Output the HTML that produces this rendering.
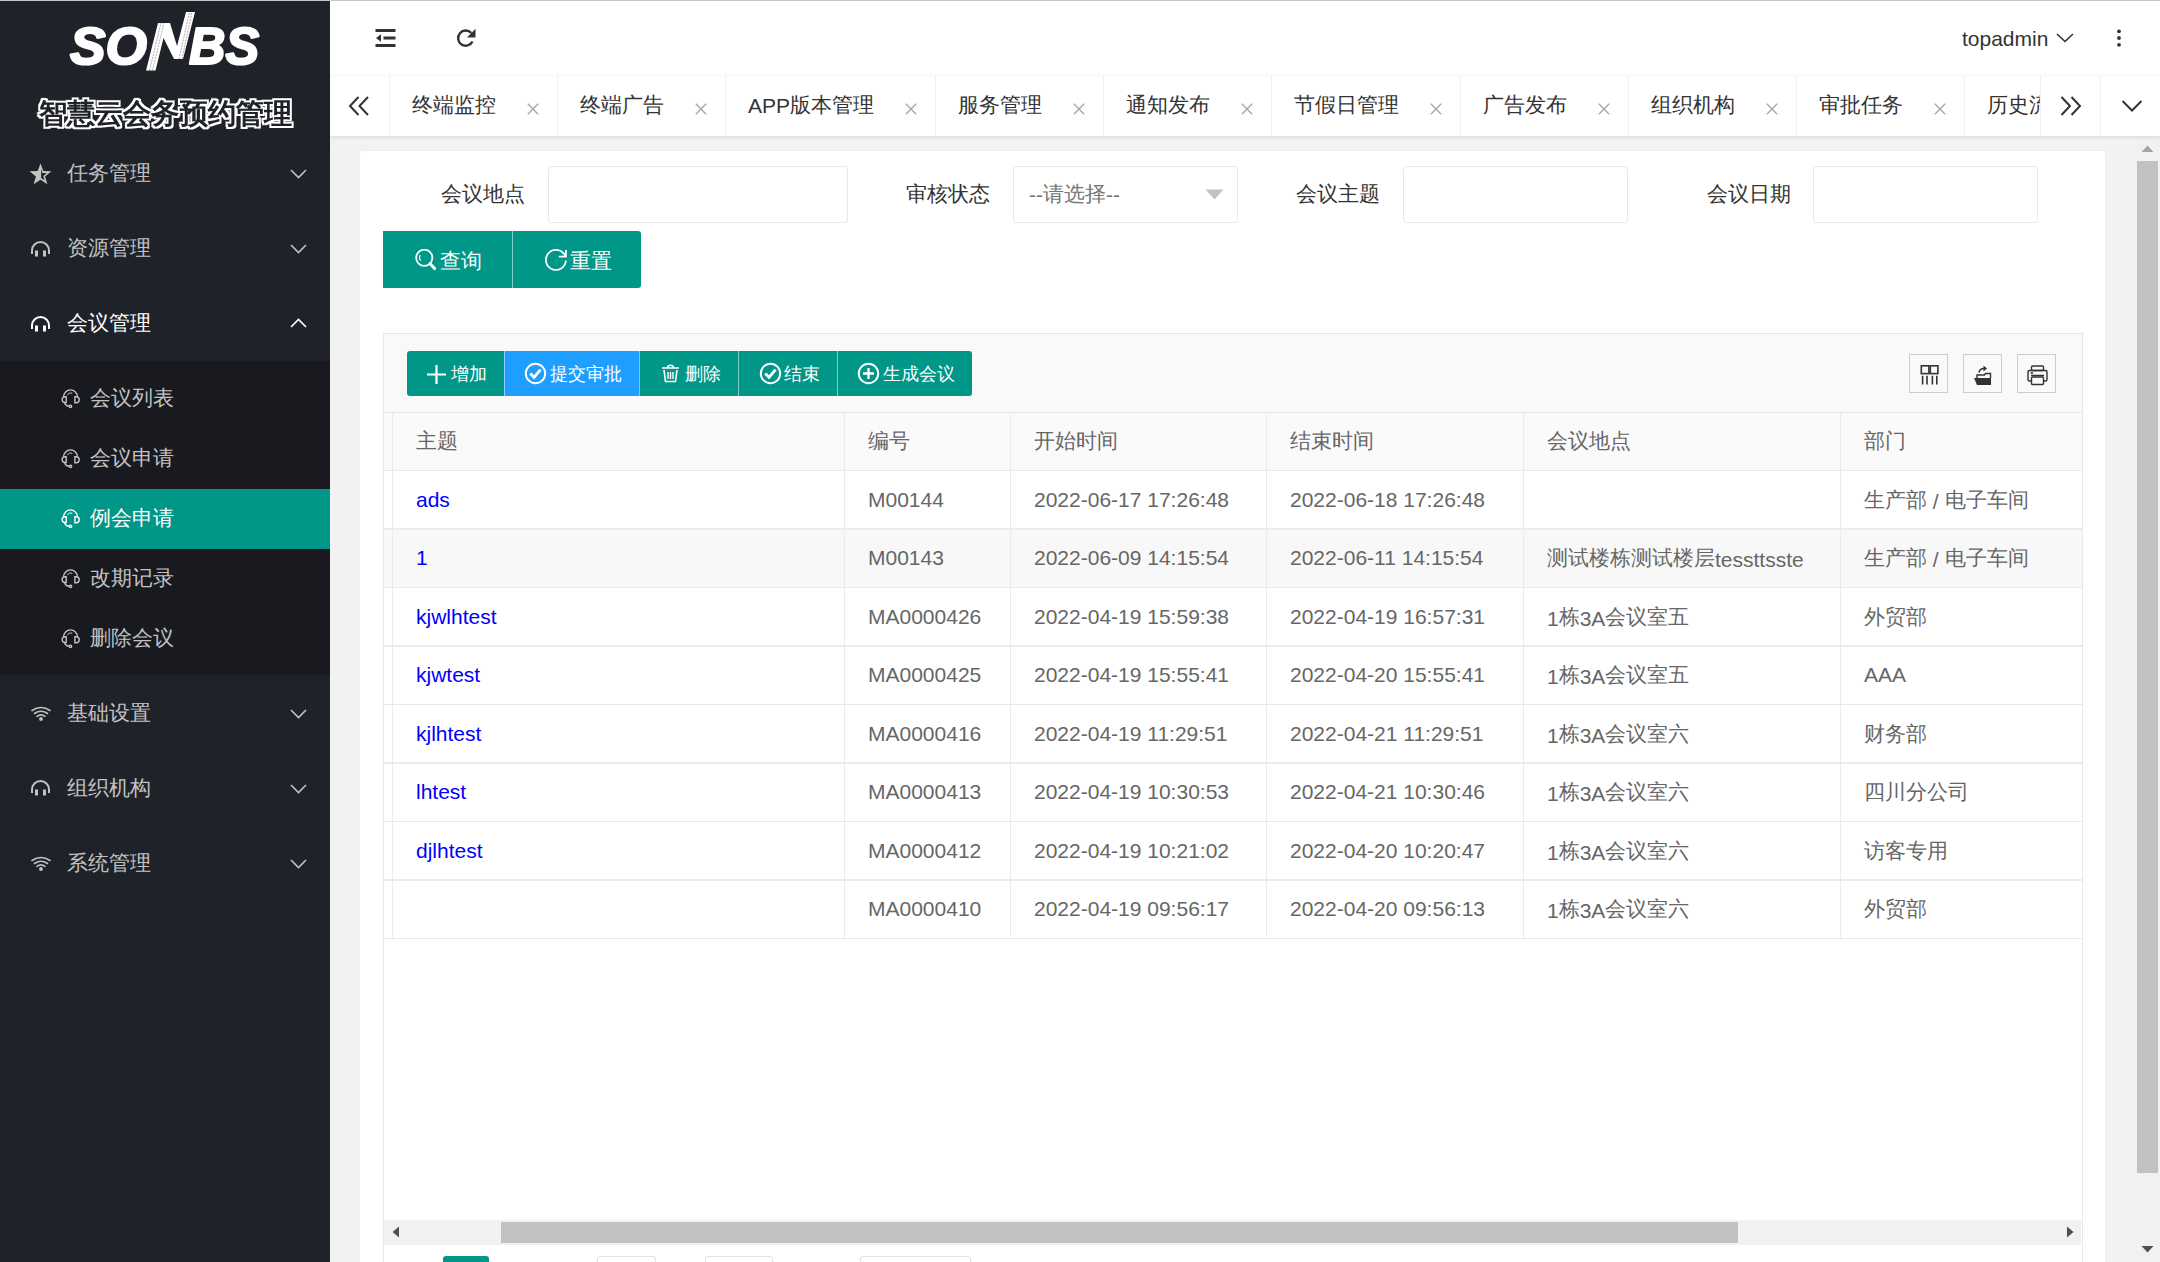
<!DOCTYPE html>
<html><head><meta charset="utf-8">
<style>
*{box-sizing:border-box;margin:0;padding:0}
html,body{width:2160px;height:1262px;overflow:hidden;background:#f2f2f2;font-family:"Liberation Sans",sans-serif;color:#333}
.abs{position:absolute}
#topline{position:absolute;z-index:9;left:0;top:0;width:2160px;height:1px;background:#c6c6c6}
#side{position:absolute;left:0;top:0;width:330px;height:1262px;background:#20222a}
#sep{position:absolute;left:0;top:151px;width:330px;height:1px;background:#1c1e24}
.mi{position:absolute;left:0;width:330px;height:75px;color:#c2c2c3;font-size:21px;line-height:75px}
.mi .t{position:absolute;left:67px;top:0}
.mi svg{position:absolute}
#sub{position:absolute;left:0;top:361px;width:330px;height:314px;background:#181a1f}
.si{position:absolute;left:0;width:330px;height:60px;color:#c2c2c3;font-size:21px;line-height:60px}
.si .t{position:absolute;left:90px;top:0}
.si svg{position:absolute;left:61px;top:20px}
.si.act{background:#009688;color:#fff}
#hdr{position:absolute;left:330px;top:0;width:1830px;height:75px;background:#fff}
#tabs{position:absolute;z-index:5;left:330px;top:75px;width:1830px;height:61px;background:#fff;border-top:1px solid #f6f6f6;box-shadow:0 2px 3px rgba(0,0,0,.08)}
.tab{position:absolute;top:0;height:60px;border-left:1px solid #f0f0f0;font-size:21px;line-height:60px;color:#333;white-space:nowrap;overflow:hidden}
.tab .t{position:absolute;left:22px;top:0}
.tab .x{position:absolute;top:27px;width:12px;height:12px}
#card{position:absolute;left:360px;top:151px;width:1745px;height:1200px;background:#fff;border-radius:3px;box-shadow:0 0 1px rgba(0,0,0,.12)}
.lbl{position:absolute;font-size:21px;line-height:24px;color:#333;white-space:nowrap}
.inp{position:absolute;top:166px;height:57px;border:1px solid #e9e9e9;border-radius:3px;background:#fff}
.btn{position:absolute;top:231px;height:57px;background:#009688;color:#fff;font-size:21px}
#tbl{position:absolute;left:383px;top:333px;width:1700px;height:1000px;border:1px solid #e8e8e8;background:#fff}
#tool{position:absolute;left:0;top:0;width:1698px;height:79px;background:#f9f9f9;border-bottom:1px solid #e8e8e8}
.tb{position:absolute;top:17px;height:45px;color:#fff;font-size:18px;line-height:45px;white-space:nowrap}
.tb .t{position:absolute;top:0}
.tb svg{position:absolute}
.ic{position:absolute;top:20px;width:39px;height:39px;border:1px solid #ccc}
.row{position:absolute;left:0;width:1698px;border-bottom:1px solid #e6e6e6;font-size:21px;color:#666;white-space:nowrap}
.row .c{position:absolute;top:0;height:100%;border-left:1px solid #ebebeb}
.row .c span{position:absolute;left:23px}
.lk{color:#0000ff}
.cj{position:relative;top:-1px}
.mi .cj,.si .cj,.btn .cj,.tb .cj{font-weight:500}
.row .cj{top:-2px}
.tb .cj{top:1px}
.btn .cj{top:0}
</style></head><body>
<div id="topline"></div>
<div id="side">
<svg class="abs" style="left:0;top:0" width="330" height="150" viewBox="0 0 330 150">
  <g fill="#fff" stroke="#fff" stroke-width="2.2" stroke-linejoin="round" font-family="Liberation Sans" font-weight="bold" font-style="italic" font-size="52">
  <text x="70" y="64" textLength="77" lengthAdjust="spacingAndGlyphs">SO</text>
  <text x="189" y="64" textLength="70" lengthAdjust="spacingAndGlyphs">BS</text>
 </g>
 <path fill="#fff" d="M146,70.5 L155.5,70.5 L163.5,38 L174,59 L183,59 L195,12 L186,12 L177,46 L170,23 L158,23 Z"/>
 <g stroke="#6a5656" stroke-width="0.6" stroke-dasharray="2 1" opacity="0.85">
  <path d="M149.5,70.5 L161,23"/><path d="M152.5,70.5 L164,23"/>
  <path d="M179,59 L189.5,12"/><path d="M182,59 L192,12"/>
 </g>
 <defs><filter id="ol" x="-5%" y="-30%" width="110%" height="160%"><feMorphology in="SourceAlpha" operator="dilate" radius="1.5" result="d"/><feComposite in="d" in2="SourceAlpha" operator="out" result="r"/><feFlood flood-color="#fff"/><feComposite in2="r" operator="in"/></filter></defs>
 <text x="39" y="123" textLength="253" lengthAdjust="spacingAndGlyphs" font-family="Liberation Sans" font-weight="900" font-size="28" fill="#fff" filter="url(#ol)">智慧云会务预约管理</text>
</svg>
<div id="sep"></div>
<div class="mi" style="top:136px"><svg style="left:29px;top:27px" width="23" height="22" viewBox="0 0 24 23"><path fill="#c2c2c3" d="M12,0.5 L15,8.3 L23.5,8.7 L16.8,14 L19.2,22.3 L12,17.6 L4.8,22.3 L7.2,14 L0.5,8.7 L9,8.3 Z"/><path fill="#20222a" d="M12.7,6 L14,10.4 L18.6,10.6 L14.9,13.5 L16.2,18 L12.7,15.6 Z"/></svg><span class="t"><i class="cj" style="font-style:normal">任务管理</i></span><svg style="left:290px;top:33px" width="17" height="10" viewBox="0 0 17 10"><path d="M1,1 L8.5,8.5 L16,1" fill="none" stroke="#c2c2c3" stroke-width="1.6"/></svg></div>
<div class="mi" style="top:211px"><svg style="left:30px;top:29px" width="21" height="17" viewBox="0 0 21 17"><path d="M2,14 L2,10.5 A8.5,8.5 0 0 1 19,10.5 L19,14" fill="none" stroke="#c2c2c3" stroke-width="2"/><rect x="5" y="10.5" width="3" height="6" fill="#c2c2c3"/><rect x="13" y="10.5" width="3" height="6" fill="#c2c2c3"/></svg><span class="t"><i class="cj" style="font-style:normal">资源管理</i></span><svg style="left:290px;top:33px" width="17" height="10" viewBox="0 0 17 10"><path d="M1,1 L8.5,8.5 L16,1" fill="none" stroke="#c2c2c3" stroke-width="1.6"/></svg></div>
<div class="mi" style="top:286px;color:#fff"><svg style="left:30px;top:29px" width="21" height="17" viewBox="0 0 21 17"><path d="M2,14 L2,10.5 A8.5,8.5 0 0 1 19,10.5 L19,14" fill="none" stroke="#fff" stroke-width="2"/><rect x="5" y="10.5" width="3" height="6" fill="#fff"/><rect x="13" y="10.5" width="3" height="6" fill="#fff"/></svg><span class="t"><i class="cj" style="font-style:normal">会议管理</i></span><svg style="left:290px;top:32px" width="17" height="10" viewBox="0 0 17 10"><path d="M1,9 L8.5,1.5 L16,9" fill="none" stroke="#fff" stroke-width="1.6"/></svg></div>
<div id="sub">
<div class="si" style="top:8px"><svg width="20" height="20" viewBox="0 0 20 20"><g fill="none" stroke="#c2c2c3" stroke-width="1.4"><path d="M2.6,7.8 A6.9,6.9 0 0 1 16.4,7.8"/><path d="M6.2,6 A4.4,4.4 0 0 1 11.3,4.2" stroke-width="1"/><path d="M5.2,7.7 L5.2,13.5 L4,13.5 A2.9,2.9 0 0 1 4,7.7 Z"/><path d="M13.9,7.7 L13.9,13.7 L15.3,13.7 A2.9,3 0 0 0 15.3,7.7 Z"/><path d="M3.6,13.8 Q4.8,17.3 8.2,17.3"/><circle cx="9.5" cy="17.3" r="1.2"/></g></svg><span class="t"><i class="cj" style="font-style:normal">会议列表</i></span></div>
<div class="si" style="top:68px"><svg width="20" height="20" viewBox="0 0 20 20"><g fill="none" stroke="#c2c2c3" stroke-width="1.4"><path d="M2.6,7.8 A6.9,6.9 0 0 1 16.4,7.8"/><path d="M6.2,6 A4.4,4.4 0 0 1 11.3,4.2" stroke-width="1"/><path d="M5.2,7.7 L5.2,13.5 L4,13.5 A2.9,2.9 0 0 1 4,7.7 Z"/><path d="M13.9,7.7 L13.9,13.7 L15.3,13.7 A2.9,3 0 0 0 15.3,7.7 Z"/><path d="M3.6,13.8 Q4.8,17.3 8.2,17.3"/><circle cx="9.5" cy="17.3" r="1.2"/></g></svg><span class="t"><i class="cj" style="font-style:normal">会议申请</i></span></div>
<div class="si act" style="top:128px"><svg width="20" height="20" viewBox="0 0 20 20"><g fill="none" stroke="#fff" stroke-width="1.4"><path d="M2.6,7.8 A6.9,6.9 0 0 1 16.4,7.8"/><path d="M6.2,6 A4.4,4.4 0 0 1 11.3,4.2" stroke-width="1"/><path d="M5.2,7.7 L5.2,13.5 L4,13.5 A2.9,2.9 0 0 1 4,7.7 Z"/><path d="M13.9,7.7 L13.9,13.7 L15.3,13.7 A2.9,3 0 0 0 15.3,7.7 Z"/><path d="M3.6,13.8 Q4.8,17.3 8.2,17.3"/><circle cx="9.5" cy="17.3" r="1.2"/></g></svg><span class="t"><i class="cj" style="font-style:normal">例会申请</i></span></div>
<div class="si" style="top:188px"><svg width="20" height="20" viewBox="0 0 20 20"><g fill="none" stroke="#c2c2c3" stroke-width="1.4"><path d="M2.6,7.8 A6.9,6.9 0 0 1 16.4,7.8"/><path d="M6.2,6 A4.4,4.4 0 0 1 11.3,4.2" stroke-width="1"/><path d="M5.2,7.7 L5.2,13.5 L4,13.5 A2.9,2.9 0 0 1 4,7.7 Z"/><path d="M13.9,7.7 L13.9,13.7 L15.3,13.7 A2.9,3 0 0 0 15.3,7.7 Z"/><path d="M3.6,13.8 Q4.8,17.3 8.2,17.3"/><circle cx="9.5" cy="17.3" r="1.2"/></g></svg><span class="t"><i class="cj" style="font-style:normal">改期记录</i></span></div>
<div class="si" style="top:248px"><svg width="20" height="20" viewBox="0 0 20 20"><g fill="none" stroke="#c2c2c3" stroke-width="1.4"><path d="M2.6,7.8 A6.9,6.9 0 0 1 16.4,7.8"/><path d="M6.2,6 A4.4,4.4 0 0 1 11.3,4.2" stroke-width="1"/><path d="M5.2,7.7 L5.2,13.5 L4,13.5 A2.9,2.9 0 0 1 4,7.7 Z"/><path d="M13.9,7.7 L13.9,13.7 L15.3,13.7 A2.9,3 0 0 0 15.3,7.7 Z"/><path d="M3.6,13.8 Q4.8,17.3 8.2,17.3"/><circle cx="9.5" cy="17.3" r="1.2"/></g></svg><span class="t"><i class="cj" style="font-style:normal">删除会议</i></span></div>

</div>
<div class="mi" style="top:676px"><svg style="left:31px;top:30px" width="20" height="15" viewBox="0 0 20 15"><g fill="none" stroke="#c2c2c3" stroke-width="1.6" stroke-linecap="round"><path d="M1,4.5 Q10,-1.5 19,4.5"/><path d="M3.5,7.5 Q10,3 16.5,7.5"/><path d="M6,10.3 Q10,7.5 14,10.3"/></g><circle cx="10" cy="13" r="1.9" fill="#c2c2c3"/></svg><span class="t"><i class="cj" style="font-style:normal">基础设置</i></span><svg style="left:290px;top:33px" width="17" height="10" viewBox="0 0 17 10"><path d="M1,1 L8.5,8.5 L16,1" fill="none" stroke="#c2c2c3" stroke-width="1.6"/></svg></div>
<div class="mi" style="top:751px"><svg style="left:30px;top:28px" width="21" height="17" viewBox="0 0 21 17"><path d="M2,14 L2,10.5 A8.5,8.5 0 0 1 19,10.5 L19,14" fill="none" stroke="#c2c2c3" stroke-width="2"/><rect x="5" y="10.5" width="3" height="6" fill="#c2c2c3"/><rect x="13" y="10.5" width="3" height="6" fill="#c2c2c3"/></svg><span class="t"><i class="cj" style="font-style:normal">组织机构</i></span><svg style="left:290px;top:33px" width="17" height="10" viewBox="0 0 17 10"><path d="M1,1 L8.5,8.5 L16,1" fill="none" stroke="#c2c2c3" stroke-width="1.6"/></svg></div>
<div class="mi" style="top:826px"><svg style="left:31px;top:30px" width="20" height="15" viewBox="0 0 20 15"><g fill="none" stroke="#c2c2c3" stroke-width="1.6" stroke-linecap="round"><path d="M1,4.5 Q10,-1.5 19,4.5"/><path d="M3.5,7.5 Q10,3 16.5,7.5"/><path d="M6,10.3 Q10,7.5 14,10.3"/></g><circle cx="10" cy="13" r="1.9" fill="#c2c2c3"/></svg><span class="t"><i class="cj" style="font-style:normal">系统管理</i></span><svg style="left:290px;top:33px" width="17" height="10" viewBox="0 0 17 10"><path d="M1,1 L8.5,8.5 L16,1" fill="none" stroke="#c2c2c3" stroke-width="1.6"/></svg></div>
</div>
<div id="hdr">
<svg class="abs" style="left:45px;top:28px" width="22" height="19" viewBox="0 0 22 19"><g fill="#333"><rect x="0.5" y="1" width="20" height="3"/><rect x="8.5" y="8.5" width="12" height="3"/><rect x="0.5" y="16" width="20" height="3"/><path d="M1,10 L6,6.3 L6,13.7 Z"/></g></svg>
<svg class="abs" style="left:126px;top:28px" width="21" height="21" viewBox="0 0 21 21"><path d="M16.5,13.5 A7.6,7.6 0 1 1 15.3,5" fill="none" stroke="#333" stroke-width="2.4"/><path d="M19.5,0.8 L19.5,9.5 L11,9.5 Z" fill="#333"/></svg>
<span class="abs" style="left:1632px;top:27px;font-size:21px;line-height:24px;color:#333">topadmin</span>
<svg class="abs" style="left:1726px;top:33px" width="18" height="10" viewBox="0 0 18 10"><path d="M1,1 L9,8.5 L17,1" fill="none" stroke="#333" stroke-width="1.6"/></svg>
<svg class="abs" style="left:1786px;top:28px" width="6" height="20" viewBox="0 0 6 20"><g fill="#333"><circle cx="3" cy="3.3" r="1.9"/><circle cx="3" cy="10" r="1.9"/><circle cx="3" cy="16.8" r="1.9"/></g></svg>
</div>
<div id="tabs">
<svg class="abs" style="left:18px;top:20px" width="22" height="20" viewBox="0 0 22 20"><path d="M10.5,1 L2,10 L10.5,19 M20,1 L11.5,10 L20,19" fill="none" stroke="#333" stroke-width="2"/></svg>
<div class="tab" style="left:59px;width:168px"><span class="t"><i class="cj" style="font-style:normal">终端监控</i></span><svg class="x" style="left:137px" width="12" height="12" viewBox="0 0 12 12"><path d="M0.8,0.8 L11.2,11.2 M11.2,0.8 L0.8,11.2" stroke="#a6a6a6" stroke-width="1.4"/></svg></div>
<div class="tab" style="left:227px;width:168px"><span class="t"><i class="cj" style="font-style:normal">终端广告</i></span><svg class="x" style="left:137px" width="12" height="12" viewBox="0 0 12 12"><path d="M0.8,0.8 L11.2,11.2 M11.2,0.8 L0.8,11.2" stroke="#a6a6a6" stroke-width="1.4"/></svg></div>
<div class="tab" style="left:395px;width:210px"><span class="t">APP<i class="cj" style="font-style:normal">版本管理</i></span><svg class="x" style="left:179px" width="12" height="12" viewBox="0 0 12 12"><path d="M0.8,0.8 L11.2,11.2 M11.2,0.8 L0.8,11.2" stroke="#a6a6a6" stroke-width="1.4"/></svg></div>
<div class="tab" style="left:605px;width:168px"><span class="t"><i class="cj" style="font-style:normal">服务管理</i></span><svg class="x" style="left:137px" width="12" height="12" viewBox="0 0 12 12"><path d="M0.8,0.8 L11.2,11.2 M11.2,0.8 L0.8,11.2" stroke="#a6a6a6" stroke-width="1.4"/></svg></div>
<div class="tab" style="left:773px;width:168px"><span class="t"><i class="cj" style="font-style:normal">通知发布</i></span><svg class="x" style="left:137px" width="12" height="12" viewBox="0 0 12 12"><path d="M0.8,0.8 L11.2,11.2 M11.2,0.8 L0.8,11.2" stroke="#a6a6a6" stroke-width="1.4"/></svg></div>
<div class="tab" style="left:941px;width:189px"><span class="t"><i class="cj" style="font-style:normal">节假日管理</i></span><svg class="x" style="left:158px" width="12" height="12" viewBox="0 0 12 12"><path d="M0.8,0.8 L11.2,11.2 M11.2,0.8 L0.8,11.2" stroke="#a6a6a6" stroke-width="1.4"/></svg></div>
<div class="tab" style="left:1130px;width:168px"><span class="t"><i class="cj" style="font-style:normal">广告发布</i></span><svg class="x" style="left:137px" width="12" height="12" viewBox="0 0 12 12"><path d="M0.8,0.8 L11.2,11.2 M11.2,0.8 L0.8,11.2" stroke="#a6a6a6" stroke-width="1.4"/></svg></div>
<div class="tab" style="left:1298px;width:168px"><span class="t"><i class="cj" style="font-style:normal">组织机构</i></span><svg class="x" style="left:137px" width="12" height="12" viewBox="0 0 12 12"><path d="M0.8,0.8 L11.2,11.2 M11.2,0.8 L0.8,11.2" stroke="#a6a6a6" stroke-width="1.4"/></svg></div>
<div class="tab" style="left:1466px;width:168px"><span class="t"><i class="cj" style="font-style:normal">审批任务</i></span><svg class="x" style="left:137px" width="12" height="12" viewBox="0 0 12 12"><path d="M0.8,0.8 L11.2,11.2 M11.2,0.8 L0.8,11.2" stroke="#a6a6a6" stroke-width="1.4"/></svg></div>
<div class="tab" style="left:1634px;width:76px"><span class="t"><i class="cj" style="font-style:normal">历史流程</i></span></div>
<div class="tab" style="left:1710px;width:60px;background:#fff"><svg class="abs" style="left:19px;top:20px" width="22" height="20" viewBox="0 0 22 20"><path d="M1.5,1 L10,10 L1.5,19 M11.5,1 L20,10 L11.5,19" fill="none" stroke="#333" stroke-width="2"/></svg></div>
<div class="tab" style="left:1770px;width:60px;background:#fff"><svg class="abs" style="left:20px;top:24px" width="22" height="12" viewBox="0 0 22 12"><path d="M1.5,1 L11,10.5 L20.5,1" fill="none" stroke="#333" stroke-width="2"/></svg></div>
</div>
<div id="card"></div>
<span class="lbl" style="left:441px;top:183px"><i class="cj" style="font-style:normal">会议地点</i></span>
<div class="inp" style="left:548px;width:300px"></div>
<span class="lbl" style="left:906px;top:183px"><i class="cj" style="font-style:normal">审核状态</i></span>
<div class="inp" style="left:1013px;width:225px"><span class="abs" style="left:15px;top:16px;font-size:21px;line-height:24px;color:#757575">--<i class="cj" style="font-style:normal">请选择</i>--</span><svg class="abs" style="left:191px;top:22px" width="19" height="11" viewBox="0 0 19 11"><path d="M0.5,0.5 L18.5,0.5 L9.5,10.5 Z" fill="#c2c2c2"/></svg></div>
<span class="lbl" style="left:1296px;top:183px"><i class="cj" style="font-style:normal">会议主题</i></span>
<div class="inp" style="left:1403px;width:225px"></div>
<span class="lbl" style="left:1707px;top:183px"><i class="cj" style="font-style:normal">会议日期</i></span>
<div class="inp" style="left:1813px;width:225px"></div>
<div class="btn" style="left:383px;width:129px;border-radius:0"><svg class="abs" style="left:32px;top:18px" width="23" height="23" viewBox="0 0 23 23"><circle cx="9.3" cy="8.8" r="8.1" fill="none" stroke="#fff" stroke-width="1.8"/><path d="M15,14.6 L19.6,19.6" stroke="#fff" stroke-width="3" stroke-linecap="round"/><path d="M5.2,6 A5.5,5.5 0 0 0 5.6,11.6" fill="none" stroke="#fff" stroke-width="1.1"/></svg><span class="abs" style="left:57px;top:18px;line-height:24px"><i class="cj" style="font-style:normal">查询</i></span></div>
<div class="btn" style="left:512px;width:129px;border-left:1px solid rgba(255,255,255,.5);border-radius:0 3px 3px 0"><svg class="abs" style="left:29px;top:16px" width="26" height="26" viewBox="0 0 26 26"><path d="M23.9,13.5 A10,10 0 1 1 21.7,6.6 L23.4,9" fill="none" stroke="#fff" stroke-width="1.8"/><path d="M23.9,3 L23.9,9.6 L16.9,9.6" fill="none" stroke="#fff" stroke-width="1.9"/></svg><span class="abs" style="left:57px;top:18px;line-height:24px"><i class="cj" style="font-style:normal">重置</i></span></div>
<div id="tbl">
<div id="tool">
<div class="tb" style="left:23px;width:97px;background:#009688;border-radius:3px 0 0 3px"><svg style="left:20px;top:14px" width="19" height="19" viewBox="0 0 19 19"><path d="M9.5,0 L9.5,19 M0,9.5 L19,9.5" stroke="#fff" stroke-width="2.2"/></svg><span class="t" style="left:44px"><i class="cj" style="font-style:normal">增加</i></span></div>
<div class="tb" style="left:120px;width:135px;background:#1e9fff;border-left:1px solid rgba(255,255,255,.5)"><svg style="left:19px;top:11px" width="23" height="23" viewBox="0 0 23 23"><circle cx="11.5" cy="11.5" r="9.7" fill="none" stroke="#fff" stroke-width="2"/><path d="M6.3,11.6 L10,15.4 L16.6,7.6" fill="none" stroke="#fff" stroke-width="2.9"/></svg><span class="t" style="left:45px"><i class="cj" style="font-style:normal">提交审批</i></span></div>
<div class="tb" style="left:255px;width:99px;background:#009688;border-left:1px solid rgba(255,255,255,.5)"><svg style="left:21px;top:13px" width="19" height="19" viewBox="0 0 19 19"><path d="M1,4 L18,4 M6.5,4 Q6.5,1.2 9.5,1.2 Q12.5,1.2 12.5,4" fill="none" stroke="#fff" stroke-width="1.6"/><path d="M3,6 L4.5,17.5 L14.5,17.5 L16,6" fill="none" stroke="#fff" stroke-width="1.6"/><path d="M7,8 L7,15 M9.5,8 L9.5,15 M12,8 L12,15" stroke="#fff" stroke-width="1.4"/></svg><span class="t" style="left:45px"><i class="cj" style="font-style:normal">删除</i></span></div>
<div class="tb" style="left:354px;width:99px;background:#009688;border-left:1px solid rgba(255,255,255,.5)"><svg style="left:20px;top:11px" width="23" height="23" viewBox="0 0 23 23"><circle cx="11.5" cy="11.5" r="9.7" fill="none" stroke="#fff" stroke-width="2"/><path d="M6.3,11.6 L10,15.4 L16.6,7.6" fill="none" stroke="#fff" stroke-width="2.9"/></svg><span class="t" style="left:45px"><i class="cj" style="font-style:normal">结束</i></span></div>
<div class="tb" style="left:453px;width:135px;background:#009688;border-left:1px solid rgba(255,255,255,.5);border-radius:0 3px 3px 0"><svg style="left:19px;top:11px" width="23" height="23" viewBox="0 0 23 23"><circle cx="11.5" cy="11.5" r="9.7" fill="none" stroke="#fff" stroke-width="2"/><path d="M11.5,6 L11.5,17 M6,11.5 L17,11.5" stroke="#fff" stroke-width="2.3"/></svg><span class="t" style="left:45px"><i class="cj" style="font-style:normal">生成会议</i></span></div>
<div class="ic" style="left:1525px"><svg class="abs" style="left:10px;top:10px" width="20" height="20" viewBox="0 0 20 20"><g fill="none" stroke="#333" stroke-width="1.6"><rect x="1.3" y="0.8" width="7.6" height="7.8"/><rect x="10.3" y="0.8" width="7.6" height="7.8"/></g><g stroke="#333" stroke-width="1.6"><path d="M2.6,10.8 L2.6,19.5 M7,10.8 L7,19.5 M12.4,10.8 L12.4,19.5 M16.8,10.8 L16.8,19.5"/></g></svg></div>
<div class="ic" style="left:1579px"><svg class="abs" style="left:9px;top:10px" width="21" height="21" viewBox="0 0 21 21"><path d="M1,13 L4,20 L18,20 L18,13 Z" fill="#333"/><path d="M4,13 L4,10 L11.5,10 L12.5,8.5 L17.5,8.5 L17.5,13" fill="none" stroke="#333" stroke-width="1.4"/><path d="M6,7.5 Q6.5,3.5 11,3.5" fill="none" stroke="#333" stroke-width="1.6"/><path d="M10.5,0.5 L14,3.5 L10.5,6.5 Z" fill="#333"/></svg></div>
<div class="ic" style="left:1633px"><svg class="abs" style="left:9px;top:10px" width="21" height="21" viewBox="0 0 21 21"><g fill="none" stroke="#333" stroke-width="1.4"><rect x="4.5" y="1" width="12" height="4.5" rx="1"/><path d="M4.5,16 L2.5,16 Q1,16 1,14.5 L1,7 Q1,5.5 2.5,5.5 L18.5,5.5 Q20,5.5 20,7 L20,14.5 Q20,16 18.5,16 L16.5,16"/><rect x="4.5" y="12" width="12" height="7.5" rx="1"/><path d="M3.5,8 L6,8 M4,10.5 L17,10.5"/></g></svg></div>
</div>
<div class="row" style="top:79px;height:58px;background:#fafafa;border-bottom:1px solid #e8e8e8"><div class="c" style="left:0;width:9px;border-left:0"></div><div class="c" style="left:8px;width:452px"><span style="top:16px"><i class="cj" style="font-style:normal">主题</i></span></div><div class="c" style="left:460px;width:166px"><span style="top:16px"><i class="cj" style="font-style:normal">编号</i></span></div><div class="c" style="left:626px;width:256px"><span style="top:16px"><i class="cj" style="font-style:normal">开始时间</i></span></div><div class="c" style="left:882px;width:257px"><span style="top:16px"><i class="cj" style="font-style:normal">结束时间</i></span></div><div class="c" style="left:1139px;width:317px"><span style="top:16px"><i class="cj" style="font-style:normal">会议地点</i></span></div><div class="c" style="left:1456px;width:242px"><span style="top:16px"><i class="cj" style="font-style:normal">部门</i></span></div></div>
<div class="row" style="top:137px;height:59px;background:#fff;border-bottom:2px solid #ececec"><div class="c" style="left:0;width:9px;border-left:0"></div><div class="c" style="left:8px;width:452px"><span class="lk" style="top:17px">ads</span></div><div class="c" style="left:460px;width:166px"><span style="top:17px">M00144</span></div><div class="c" style="left:626px;width:256px"><span style="top:17px">2022-06-17 17:26:48</span></div><div class="c" style="left:882px;width:257px"><span style="top:17px">2022-06-18 17:26:48</span></div><div class="c" style="left:1139px;width:317px"><span style="top:17px"></span></div><div class="c" style="left:1456px;width:242px"><span style="top:17px"><i class="cj" style="font-style:normal">生产部</i> / <i class="cj" style="font-style:normal">电子车间</i></span></div></div>
<div class="row" style="top:196px;height:58px;background:#f8f8f8;border-bottom:1px solid #e8e8e8"><div class="c" style="left:0;width:9px;border-left:0"></div><div class="c" style="left:8px;width:452px"><span class="lk" style="top:16px">1</span></div><div class="c" style="left:460px;width:166px"><span style="top:16px">M00143</span></div><div class="c" style="left:626px;width:256px"><span style="top:16px">2022-06-09 14:15:54</span></div><div class="c" style="left:882px;width:257px"><span style="top:16px">2022-06-11 14:15:54</span></div><div class="c" style="left:1139px;width:317px"><span style="top:16px"><i class="cj" style="font-style:normal">测试楼栋测试楼层</i>tessttsste</span></div><div class="c" style="left:1456px;width:242px"><span style="top:16px"><i class="cj" style="font-style:normal">生产部</i> / <i class="cj" style="font-style:normal">电子车间</i></span></div></div>
<div class="row" style="top:254px;height:59px;background:#fff;border-bottom:2px solid #ececec"><div class="c" style="left:0;width:9px;border-left:0"></div><div class="c" style="left:8px;width:452px"><span class="lk" style="top:17px">kjwlhtest</span></div><div class="c" style="left:460px;width:166px"><span style="top:17px">MA0000426</span></div><div class="c" style="left:626px;width:256px"><span style="top:17px">2022-04-19 15:59:38</span></div><div class="c" style="left:882px;width:257px"><span style="top:17px">2022-04-19 16:57:31</span></div><div class="c" style="left:1139px;width:317px"><span style="top:17px">1<i class="cj" style="font-style:normal">栋</i>3A<i class="cj" style="font-style:normal">会议室五</i></span></div><div class="c" style="left:1456px;width:242px"><span style="top:17px"><i class="cj" style="font-style:normal">外贸部</i></span></div></div>
<div class="row" style="top:313px;height:58px;background:#fff;border-bottom:1px solid #e8e8e8"><div class="c" style="left:0;width:9px;border-left:0"></div><div class="c" style="left:8px;width:452px"><span class="lk" style="top:16px">kjwtest</span></div><div class="c" style="left:460px;width:166px"><span style="top:16px">MA0000425</span></div><div class="c" style="left:626px;width:256px"><span style="top:16px">2022-04-19 15:55:41</span></div><div class="c" style="left:882px;width:257px"><span style="top:16px">2022-04-20 15:55:41</span></div><div class="c" style="left:1139px;width:317px"><span style="top:16px">1<i class="cj" style="font-style:normal">栋</i>3A<i class="cj" style="font-style:normal">会议室五</i></span></div><div class="c" style="left:1456px;width:242px"><span style="top:16px">AAA</span></div></div>
<div class="row" style="top:371px;height:59px;background:#fff;border-bottom:2px solid #ececec"><div class="c" style="left:0;width:9px;border-left:0"></div><div class="c" style="left:8px;width:452px"><span class="lk" style="top:17px">kjlhtest</span></div><div class="c" style="left:460px;width:166px"><span style="top:17px">MA0000416</span></div><div class="c" style="left:626px;width:256px"><span style="top:17px">2022-04-19 11:29:51</span></div><div class="c" style="left:882px;width:257px"><span style="top:17px">2022-04-21 11:29:51</span></div><div class="c" style="left:1139px;width:317px"><span style="top:17px">1<i class="cj" style="font-style:normal">栋</i>3A<i class="cj" style="font-style:normal">会议室六</i></span></div><div class="c" style="left:1456px;width:242px"><span style="top:17px"><i class="cj" style="font-style:normal">财务部</i></span></div></div>
<div class="row" style="top:430px;height:58px;background:#fff;border-bottom:1px solid #e8e8e8"><div class="c" style="left:0;width:9px;border-left:0"></div><div class="c" style="left:8px;width:452px"><span class="lk" style="top:16px">lhtest</span></div><div class="c" style="left:460px;width:166px"><span style="top:16px">MA0000413</span></div><div class="c" style="left:626px;width:256px"><span style="top:16px">2022-04-19 10:30:53</span></div><div class="c" style="left:882px;width:257px"><span style="top:16px">2022-04-21 10:30:46</span></div><div class="c" style="left:1139px;width:317px"><span style="top:16px">1<i class="cj" style="font-style:normal">栋</i>3A<i class="cj" style="font-style:normal">会议室六</i></span></div><div class="c" style="left:1456px;width:242px"><span style="top:16px"><i class="cj" style="font-style:normal">四川分公司</i></span></div></div>
<div class="row" style="top:488px;height:59px;background:#fff;border-bottom:2px solid #ececec"><div class="c" style="left:0;width:9px;border-left:0"></div><div class="c" style="left:8px;width:452px"><span class="lk" style="top:17px">djlhtest</span></div><div class="c" style="left:460px;width:166px"><span style="top:17px">MA0000412</span></div><div class="c" style="left:626px;width:256px"><span style="top:17px">2022-04-19 10:21:02</span></div><div class="c" style="left:882px;width:257px"><span style="top:17px">2022-04-20 10:20:47</span></div><div class="c" style="left:1139px;width:317px"><span style="top:17px">1<i class="cj" style="font-style:normal">栋</i>3A<i class="cj" style="font-style:normal">会议室六</i></span></div><div class="c" style="left:1456px;width:242px"><span style="top:17px"><i class="cj" style="font-style:normal">访客专用</i></span></div></div>
<div class="row" style="top:547px;height:58px;background:#fff;border-bottom:1px solid #e8e8e8"><div class="c" style="left:0;width:9px;border-left:0"></div><div class="c" style="left:8px;width:452px"><span class="lk" style="top:16px"></span></div><div class="c" style="left:460px;width:166px"><span style="top:16px">MA0000410</span></div><div class="c" style="left:626px;width:256px"><span style="top:16px">2022-04-19 09:56:17</span></div><div class="c" style="left:882px;width:257px"><span style="top:16px">2022-04-20 09:56:13</span></div><div class="c" style="left:1139px;width:317px"><span style="top:16px">1<i class="cj" style="font-style:normal">栋</i>3A<i class="cj" style="font-style:normal">会议室六</i></span></div><div class="c" style="left:1456px;width:242px"><span style="top:16px"><i class="cj" style="font-style:normal">外贸部</i></span></div></div>

</div>
<div id="hscroll" class="abs" style="left:384px;top:1220px;width:1697px;height:25px;background:#f1f1f1">
<div class="abs" style="left:117px;top:2px;width:1237px;height:21px;background:#c1c1c1"></div>
<svg class="abs" style="left:8px;top:6px" width="8" height="12" viewBox="0 0 8 12"><path d="M7,0.5 L7,11.5 L0.5,6 Z" fill="#505050"/></svg>
<svg class="abs" style="left:1682px;top:6px" width="8" height="12" viewBox="0 0 8 12"><path d="M1,0.5 L1,11.5 L7.5,6 Z" fill="#505050"/></svg>
</div>
<div class="abs" style="left:384px;top:1245px;width:1697px;height:17px;background:#fff"></div>
<div class="abs" style="left:443px;top:1256px;width:46px;height:10px;background:#009688;border-radius:3px"></div>
<div class="abs" style="left:597px;top:1256px;width:59px;height:10px;border:1px solid #e2e2e2;border-radius:3px"></div>
<div class="abs" style="left:705px;top:1256px;width:68px;height:10px;border:1px solid #e2e2e2;border-radius:3px"></div>
<div class="abs" style="left:860px;top:1256px;width:111px;height:10px;border:1px solid #e2e2e2;border-radius:3px"></div>
<div id="vscroll" class="abs" style="left:2135px;top:136px;width:25px;height:1126px;background:#f1f1f1">
<div class="abs" style="left:2px;top:25px;width:21px;height:1012px;background:#c1c1c1"></div>
<svg class="abs" style="left:6px;top:9px" width="13" height="8" viewBox="0 0 13 8"><path d="M0.5,7 L12.5,7 L6.5,0.5 Z" fill="#a3a3a3"/></svg>
<svg class="abs" style="left:6px;top:1109px" width="13" height="8" viewBox="0 0 13 8"><path d="M0.5,1 L12.5,1 L6.5,7.5 Z" fill="#505050"/></svg>
</div>
</body></html>
